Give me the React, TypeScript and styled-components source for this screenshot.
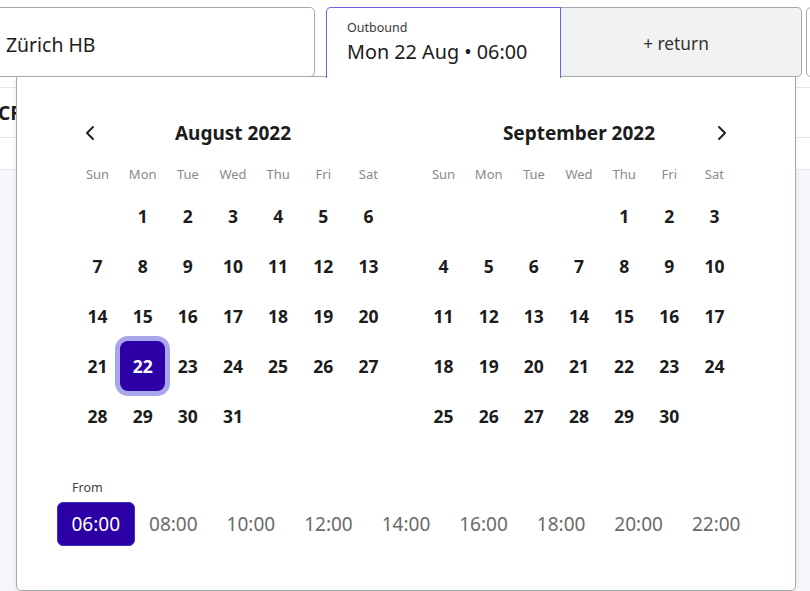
import React from "react";
import styled, { createGlobalStyle } from "styled-components";
import { ChevronLeft, ChevronRight } from "lucide-react";

const Global = createGlobalStyle`
  html, body { margin: 0; padding: 0; background: #fff; }
  body { font-family: "Noto Sans", "Open Sans", sans-serif; color: #1c1c1c; }
  * { box-sizing: border-box; }
`;

const PURPLE = "#2c00a6";

const Page = styled.div`
  position: relative;
  width: 810px;
  height: 591px;
  overflow: hidden;
  display: flex;
  flex-direction: column;
`;

const TopBar = styled.div`
  display: flex;
  padding-top: 7px;
  margin-left: -25px;
  & > * { flex-shrink: 0; }
`;

const FromField = styled.div`
  width: 340px;
  height: 70px;
  border: 1px solid #a2aaaa;
  border-radius: 5px;
  padding: 4px 0 0 30px;
  display: flex;
  align-items: center;
  font-size: 19.4px;
  color: #1c1c1c;
`;

const DateField = styled.div`
  position: relative;
  z-index: 3;
  margin-left: 11px;
  width: 235px;
  height: 71px;
  background: #fff;
  border: 1px solid #6a64e6;
  border-bottom: none;
  border-radius: 5px 0 0 0;
  padding: 12px 0 0 20px;
  display: flex;
  flex-direction: column;
`;

const FieldLabel = styled.span`
  font-size: 12.5px;
  color: #3a3a3a;
  line-height: 16px;
`;

const FieldValue = styled.span`
  font-size: 19.8px;
  color: #1c1c1c;
  line-height: 26px;
  margin-top: 3px;
  white-space: nowrap;
`;

const ReturnButton = styled.div`
  width: 241px;
  height: 70px;
  background: #f1f2f2;
  border: 1px solid #a2aaaa;
  border-left: none;
  border-radius: 0 5px 5px 0;
  display: flex;
  align-items: center;
  justify-content: center;
  padding: 2px 10px 0 0;
  font-size: 17.3px;
  color: #333;
`;

const NextField = styled.div`
  margin-left: 4px;
  width: 120px;
  height: 70px;
  border: 1px solid #a2aaaa;
  border-radius: 5px;
`;

const SubBar = styled.div`
  margin-top: 9px;
  height: 51px;
  border-top: 1px solid #e6e8ea;
  border-bottom: 1px solid #e6e8ea;
  display: flex;
  align-items: center;
`;

const SubText = styled.span`
  margin-left: -2px;
  font-size: 19px;
  font-weight: 700;
  color: #1c1c1c;
`;

const Content = styled.div`
  margin-top: 31px;
  flex: 1;
  background: #f5f7fb;
  border-top: 1px solid #e4e7ec;
`;

const Popup = styled.div`
  position: absolute;
  z-index: 2;
  left: 16px;
  top: 76px;
  width: 780px;
  height: 515px;
  background: #fff;
  border: 1px solid #a2aaaa;
  border-radius: 0 0 5px 5px;
  box-shadow: 0 2px 6px rgba(0, 0, 0, 0.08);
  padding-top: 36px;
`;

const Months = styled.div`
  display: flex;
  justify-content: center;
  gap: 30px;
`;

const Month = styled.div`
  width: 316px;
`;

const MonthHeader = styled.div`
  display: grid;
  grid-template-columns: 1fr auto 1fr;
  align-items: center;
  height: 40px;
`;

const MonthTitle = styled.h2`
  margin: 0;
  font-size: 19px;
  font-weight: 700;
  color: #1c1c1c;
`;

const NavButton = styled.button<{ $side: "left" | "right" }>`
  border: none;
  background: none;
  padding: 0;
  width: 24px;
  height: 24px;
  display: flex;
  align-items: center;
  justify-content: center;
  color: #222;
  justify-self: ${(p) => (p.$side === "left" ? "start" : "end")};
  margin: ${(p) => (p.$side === "left" ? "0 0 0 3px" : "0 3px 0 0")};
  grid-column: ${(p) => (p.$side === "left" ? 1 : 3)};
  grid-row: 1;
`;

const TitleCell = styled.div`
  grid-column: 2;
  grid-row: 1;
`;

const Weekdays = styled.div`
  display: grid;
  grid-template-columns: repeat(7, 1fr);
  margin-top: 9px;
  height: 24px;
  align-items: center;
`;

const Weekday = styled.span`
  text-align: center;
  font-size: 13px;
  color: #8a8a8a;
`;

const Days = styled.div`
  display: grid;
  grid-template-columns: repeat(7, 1fr);
  grid-auto-rows: 50px;
  margin-top: 5px;
`;

const Day = styled.div<{ $selected?: boolean; $start?: number }>`
  display: flex;
  align-items: center;
  justify-content: center;
  font-size: 17.5px;
  font-weight: 700;
  color: ${(p) => (p.$selected ? "#fff" : "#1c1c1c")};
  background: ${(p) => (p.$selected ? PURPLE : "transparent")};
  border-radius: 8px;
  box-shadow: ${(p) => (p.$selected ? "0 0 0 5px #aaa6ec" : "none")};
  ${(p) => (p.$start ? `grid-column-start: ${p.$start};` : "")}
`;

const TimeSection = styled.div`
  margin-top: 39px;
  padding: 0 40px;
`;

const TimeLabel = styled.div`
  font-size: 12.5px;
  line-height: 16px;
  color: #444;
  padding-left: 15px;
`;

const TimeRow = styled.div`
  display: grid;
  grid-template-columns: repeat(9, 1fr);
  margin-top: 6px;
`;

const TimeButton = styled.button<{ $selected?: boolean }>`
  height: 44px;
  font-family: inherit;
  font-size: 19px;
  color: ${(p) => (p.$selected ? "#fff" : "#6b6b6b")};
  background: ${(p) => (p.$selected ? PURPLE : "transparent")};
  border: 1px solid ${(p) => (p.$selected ? "#3f2fc2" : "transparent")};
  border-radius: 6px;
  padding: 0;
  cursor: pointer;
`;

const WEEKDAYS = ["Sun", "Mon", "Tue", "Wed", "Thu", "Fri", "Sat"];
const TIMES = ["06:00", "08:00", "10:00", "12:00", "14:00", "16:00", "18:00", "20:00", "22:00"];

type MonthData = { title: string; start: number; days: number; side: "left" | "right"; selected?: number };

const MONTHS: MonthData[] = [
  { title: "August 2022", start: 2, days: 31, side: "left", selected: 22 },
  { title: "September 2022", start: 5, days: 30, side: "right" },
];

function CalendarMonth({ m }: { m: MonthData }) {
  return (
    <Month>
      <MonthHeader>
        <NavButton $side={m.side} aria-label={m.side === "left" ? "Previous month" : "Next month"}>
          {m.side === "left" ? <ChevronLeft size={24} strokeWidth={2} /> : <ChevronRight size={24} strokeWidth={2} />}
        </NavButton>
        <TitleCell>
          <MonthTitle>{m.title}</MonthTitle>
        </TitleCell>
      </MonthHeader>
      <Weekdays>
        {WEEKDAYS.map((w) => (
          <Weekday key={w}>{w}</Weekday>
        ))}
      </Weekdays>
      <Days>
        {Array.from({ length: m.days }, (_, i) => i + 1).map((d) => (
          <Day key={d} $start={d === 1 ? m.start : undefined} $selected={d === m.selected}>
            {d}
          </Day>
        ))}
      </Days>
    </Month>
  );
}

export default function App() {
  return (
    <>
      <Global />
      <Page>
        <TopBar>
          <FromField>Zürich HB</FromField>
          <DateField>
            <FieldLabel>Outbound</FieldLabel>
            <FieldValue>Mon 22 Aug • 06:00</FieldValue>
          </DateField>
          <ReturnButton>+ return</ReturnButton>
          <NextField />
        </TopBar>
        <SubBar>
          <SubText>CF</SubText>
        </SubBar>
        <Content />
        <Popup>
          <Months>
            {MONTHS.map((m) => (
              <CalendarMonth key={m.title} m={m} />
            ))}
          </Months>
          <TimeSection>
            <TimeLabel>From</TimeLabel>
            <TimeRow>
              {TIMES.map((t, i) => (
                <TimeButton key={t} $selected={i === 0}>
                  {t}
                </TimeButton>
              ))}
            </TimeRow>
          </TimeSection>
        </Popup>
      </Page>
    </>
  );
}
